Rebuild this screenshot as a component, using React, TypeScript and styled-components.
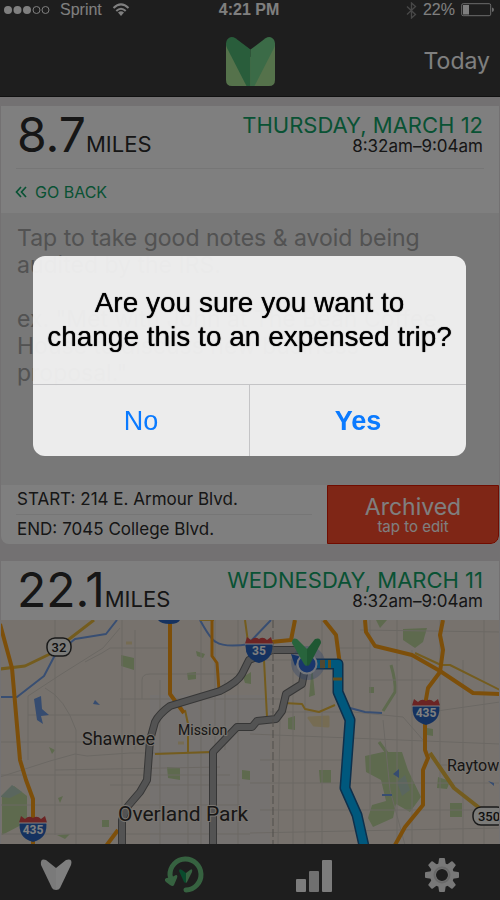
import React from "react";
import styled, { createGlobalStyle, css } from "styled-components";

const GlobalStyle = createGlobalStyle`
  * { box-sizing: border-box; }
  body { margin: 0; background: #e7e3e4; }
  button, textarea { font: inherit; color: inherit; border: 0; margin: 0; padding: 0; background: none; }
`;

const rounded = `Inter, "Noto Sans", sans-serif`;
const system = `"Liberation Sans", Arial, sans-serif`;

const Screen = styled.div`
  min-height: 100vh;
  display: flex;
  flex-direction: column;
  font-family: ${rounded};
  color: #2c2c2c;
  background: #e7e3e4;
`;

const TopBar = styled.header`
  background: #3c3c3c;
  color: #fff;
  border-bottom: 1px solid #222;
`;

const StatusBar = styled.div`
  display: grid;
  grid-template-columns: 1fr auto 1fr;
  align-items: center;
  height: 20px;
  padding: 0 6px 0 4px;
  font: 16px/20px ${system};
`;

const StatusGroup = styled.div<{ $end?: boolean }>`
  display: flex;
  align-items: center;
  gap: ${(p) => (p.$end ? 6 : 10)}px;
  justify-content: ${(p) => (p.$end ? "flex-end" : "flex-start")};
`;

const Clock = styled.time`
  font-weight: 700;
`;

const TitleBar = styled.div`
  display: grid;
  grid-template-columns: 1fr auto 1fr;
  align-items: center;
  height: 76px;
  padding: 6px 10px 0 10px;
`;

const TodayButton = styled.button`
  justify-self: end;
  grid-column: 3;
  font-size: 23px;
  line-height: 28px;
  cursor: pointer;
`;

const LogoSlot = styled.div`
  grid-column: 2;
  line-height: 0;
`;

const Trips = styled.main`
  flex: 1;
  display: flex;
  flex-direction: column;
  gap: 17px;
  padding: 9px 1px 0;
`;

const Card = styled.article<{ $open?: boolean }>`
  background: #fff;
  overflow: hidden;
  border-radius: ${(p) => (p.$open ? "0" : "0 0 8px 8px")};
`;

const CardHead = styled.div`
  display: flex;
  justify-content: space-between;
  align-items: flex-start;
  height: 59px;
  padding: 0 16px;
`;

const Miles = styled.div`
  display: flex;
  align-items: baseline;
`;

const MilesValue = styled.span`
  font-size: 48px;
  line-height: 58px;
`;

const MilesUnit = styled.span`
  font-size: 22px;
  line-height: 24px;
`;

const When = styled.div`
  padding-top: 7px;
  text-align: right;
`;

const DateLine = styled.h2`
  margin: 0;
  font-size: 22px;
  font-weight: 400;
  line-height: 24px;
  color: #12a468;
`;

const TimeLine = styled.div`
  font-size: 17px;
  line-height: 19px;
`;

const Rule = styled.hr`
  margin: 3px 15px 0;
  border: 0;
  border-top: 1px solid #ececec;
`;

const BackRow = styled.div`
  padding: 12px 14px 10px;
`;

const BackButton = styled.button`
  display: flex;
  align-items: center;
  gap: 8px;
  font-size: 16px;
  line-height: 22px;
  color: #12a468;
  cursor: pointer;
`;

const Notes = styled.textarea`
  display: block;
  width: 100%;
  height: 272px;
  padding: 12px 16px;
  resize: none;
  background: #f0f0f0;
  font-size: 23px;
  line-height: 27px;
  &::placeholder { color: #a4a4a4; opacity: 1; }
`;

const CardFoot = styled.div`
  display: flex;
  align-items: stretch;
`;

const Stops = styled.dl`
  flex: 1;
  margin: 0;
  padding: 0 15px;
`;

const Stop = styled.div`
  display: flex;
  gap: 5px;
  font-size: 17px;
  line-height: 29px;
  padding-left: 1px;
  & + & { border-top: 1px solid #ececec; }
  dt, dd { margin: 0; }
`;

const ArchivedButton = styled.button`
  width: 172px;
  background: #fe4c2c;
  border: 1px solid #e01800;
  border-bottom-right-radius: 8px;
  color: #fff;
  font-size: 23px;
  line-height: 24px;
  cursor: pointer;
  small {
    display: block;
    font-size: 15px;
    line-height: 15px;
  }
`;

const MapView = styled.svg`
  display: block;
  width: 100%;
  height: auto;
  background: #eee5db;
`;

const TabBar = styled.nav`
  display: flex;
  justify-content: space-between;
  align-items: center;
  height: 56px;
  padding: 5px 38px 0 36px;
  background: #3c3c3c;
`;

const Tab = styled.button`
  width: 40px;
  height: 40px;
  line-height: 0;
  cursor: pointer;
`;

const Backdrop = styled.div`
  position: fixed;
  inset: 0;
  display: flex;
  align-items: flex-start;
  justify-content: center;
  padding: 256px 34px 0 33px;
  background: rgba(0, 0, 0, 0.5);
`;

const Dialog = styled.div`
  width: 100%;
  max-width: 480px;
  border-radius: 12px;
  overflow: hidden;
  background: rgba(242, 242, 242, 0.95);
  font-family: ${system};
`;

const Question = styled.p`
  margin: 0;
  padding: 30px 12px 30px;
  font-size: 28px;
  line-height: 34px;
  text-align: center;
  color: #000;
  text-shadow: 0 0 1px #000;
`;

const Choices = styled.div`
  display: flex;
  border-top: 1px solid #c4c4c6;
`;

const Choice = styled.button<{ $primary?: boolean }>`
  flex: 1;
  height: 71px;
  padding-top: 2px;
  font-size: 27px;
  color: #0a7aff;
  cursor: pointer;
  ${(p) => p.$primary && css`font-weight: 700; border-left: 1px solid #c4c4c6;`}
`;

const Signal = () => (
  <svg width="46" height="10" viewBox="0 0 46 10" role="img" aria-label="Signal">
    {[4, 13.5, 23].map((x) => <circle key={x} cx={x} cy="5" r="4" fill="#fff" />)}
    {[32.5, 41.5].map((x) => <circle key={x} cx={x} cy="5" r="3.5" fill="none" stroke="#fff" />)}
  </svg>
);

const Wifi = () => (
  <svg width="18" height="14" viewBox="0 0 18 14" role="img" aria-label="Wi-Fi">
    <g fill="none" stroke="#fff" strokeWidth="2">
      <path d="M1.5 5Q9-2.2 16.5 5" />
      <path d="M4.3 8Q9 3.4 13.7 8" />
    </g>
    <path d="M6 9.6Q9 7 12 9.6L9 13Z" fill="#fff" />
  </svg>
);

const Bluetooth = () => (
  <svg width="11" height="17" viewBox="0 0 11 17" role="img" aria-label="Bluetooth">
    <path d="M1 4.5L9.5 12.5L5.5 16V1L9.5 4.5L1 12.5" fill="none" stroke="#909090" strokeWidth="1.3" />
  </svg>
);

const Battery = () => (
  <svg width="33" height="14" viewBox="0 0 33 14" role="img" aria-label="Battery">
    <rect x=".7" y=".7" width="29" height="12" rx="1.5" fill="none" stroke="#d8d8d8" />
    <rect x="2" y="2" width="6" height="9.5" fill="#fff" />
    <path d="M31 4.5Q33 5 33 6.8Q33 8.500 31 9Z" fill="#d8d8d8" />
  </svg>
);

const Logo = () => (
  <svg width="49" height="49" viewBox="0 0 49 49" role="img" aria-label="Logo">
    <path d="M0 6V43Q0 49 6 49H43Q49 49 49 43V6L24.500 20Z" fill="#aae496" />
    <path d="M24.500 12.500L9.500 1.300Q6 -1 2.800 1Q0 3 0 7Q0 9 1 11L20.500 49H24.500Z" fill="#52ba76" />
    <path d="M24.500 12.500L39.500 1.300Q43 -1 46.200 1Q49 3 49 7Q49 9 48 11L28.500 49H24.500Z" fill="#76d68e" />
  </svg>
);

const Chevrons = () => (
  <svg width="12" height="12" viewBox="0 0 12 12" aria-hidden="true">
    <path d="M6 1L1.500 6L6 11M11 1L6.500 6L11 11" fill="none" stroke="#12a468" strokeWidth="1.700" />
  </svg>
);

const minor = [
  "M85 42L102 33L110 28H170", "M0 157L50 141L75 134L87 136L130 133H210",
  "M55 0V215", "M122 0V225", "M135 10V130", "M160 60V225", "M188 110V225", "M201 0V225", "M215 0V225",
  "M28 140V76L60 55L103 28L120 8", "M45 68Q65 78 76 110V225", "M0 122H150", "M120 79H280",
  "M0 155H230", "M0 185H240", "M55 150L220 147", "M110 165H240", "M0 214H250",
  "M142 79V60Q142 54 150 54H240", "M28 95H130", "M225 60V130", "M238 0V225",
  "M293 0V225", "M305 50V225", "M322 0V225", "M353 0V90", "M370 0V190", "M397 0V225",
  "M412 30V225", "M440 0V225", "M463 40V225", "M484 0V225",
  "M250 40H400", "M270 92H350", "M250 114L500 124", "M260 140H350", "M250 163H500",
  "M260 190H500", "M250 213L500 208", "M335 66L353 92L403 97L423 120", "M360 10L500 12",
  "M340 28H370", "M370 60H430", "M430 92L500 82", "M280 100L278 225", "M440 145H500", "M383 100L390 170L405 225",
];

const parks = [
  "M121 35L134 38V50L121 46Z", "M196 31L205 34L203 38L197 36Z", "M187 53L196 52V59L188 60Z",
  "M49 127L55 130L52 134Z", "M2 177L14 166L27 176V202L2 215Z", "M102 200H109V207H102Z",
  "M58 178L63 176L60 183Z", "M57 215L70 214L65 219Z", "M167 147L180 148V160L168 158Z",
  "M403 9L427 8L423 22L415 28L403 20Z", "M376 0H387L380 8Z", "M319 150H331V163H320Z",
  "M365 136L383 132L402 132L408 150L421 177L410 192L396 184L393 198L373 207L368 198L372 185L386 181L381 160L366 152Z",
  "M438 157L450 161L447 169L437 168Z", "M450 183H462V197H450Z", "M288 98L295 96V110L288 109Z",
  "M427 108L433 109V116L427 115Z", "M243 57L251 52V64L245 63Z", "M369 67H374V73H369Z",
  "M242 150L250 151V160L242 159Z", "M312 45L315 75L309 77Z",
];

const Shield = ({ x, y, label }: { x: number; y: number; label: string }) => (
  <g transform={`translate(${x} ${y})`}>
    <path d="M-13-7Q-16 11 0 15Q16 11 13-7Z" fill="#2a65c0" />
    <path d="M-14-4Q-13-8-12-11L-8-8Q-4-12 0-9Q4-12 8-8L12-11Q13-8 14-4Z" fill="#d84848" />
    <path d="M-14-4H14" stroke="#fff" />
    <text y="7" textAnchor="middle" fontSize="12" fontWeight="700" fill="#fff">{label}</text>
  </g>
);

const Plate = ({ x, y, label }: { x: number; y: number; label: string }) => (
  <g transform={`translate(${x} ${y})`}>
    <rect x={-label.length * 4 - 4} y="-9" width={label.length * 8 + 8} height="18" rx="8" fill="#f6f6f2" stroke="#333" strokeWidth="1.500" />
    <text y="5" textAnchor="middle" fontSize="13" fontWeight="500" fill="#222">{label}</text>
  </g>
);

const TripMap = () => (
  <MapView viewBox="0 0 498 224" role="img" aria-label="Trip route map" fontFamily="Roboto, sans-serif">
    <g transform="translate(-1 0)" fill="none" strokeLinejoin="round">
      <rect x="150" y="75" width="120" height="150" fill="#e9e2e2" opacity=".6" />
      {parks.map((d) => <path key={d} d={d} fill="#bcd49c" />)}
      <path d="M397 162L405 155L410 170L402 176ZM0 177L12 165L22 172L10 178Z" fill="#b5cdbd" />
      <path d="M391 45Q396 62 395 72L383 91M379 122L387 133" stroke="#bcd49c" strokeWidth="3" />
      <path d="M126 23H132M178 123H184M309 98L328 97V106L314 105Z" fill="#ecd9a6" stroke="#ecd9a6" strokeWidth="3" />
      <g stroke="#d7d0c7" strokeWidth="1">{minor.map((d) => <path key={d} d={d} />)}</g>
      <path d="M34 79L41 76L42 89L49 95L41 96L43 104L37 100ZM93 84L95 80L100 85ZM393 154L399 149V158ZM488 161L494 163V166Z" fill="#6c98e0" />
      <g stroke="#719ce4" strokeWidth="3">
        <path d="M0 77H17L44 56L55 35L75 19L106 14L117 0" strokeWidth="2" />
        <path d="M200 0Q211 20 216 22Q225 28 250 24" strokeWidth="2" />
        <path d="M271 0L250 22M350 88L365 92L382 93M382 175H392" strokeWidth="2" />
      </g>
      <g stroke="#e8b83c" strokeWidth="2">
        <path d="M0 49L25 46L52 33L68 20L94 0" strokeWidth="3" />
        <path d="M155 134L211 132M185 90L188 104V133" />
        <path d="M200 0H214M245 0L248 22M264 40L267 97M284 83L302 84L305 89L319 92L335 85" />
        <path d="M415 33L441 45L450 45L500 70" />
        <path d="M430 133L443 152L454 168L482 190" strokeWidth="4" />
      </g>
      <g stroke="#fa9f14" strokeWidth="4">
        <path d="M0 4L12 48L20 140L26 160L33 179V225" />
        <path d="M170 0V74L184 93" />
        <path d="M212 0V36L217 43L219 70" strokeWidth="3" />
        <path d="M295 0L291 20L271 22" />
        <path d="M324 0L336 15L340 45" />
        <path d="M365 0L366 12L375 26L412 35L440 51L473 73L500 74" />
        <path d="M443 0L440 15L443 30L440 52L428 68L425 85V130L428 138L423 150V185L405 207L395 225" />
        <path d="M118 210L106 226" />
      </g>
      {[["#6d6d6d", 8], ["#a6a6a6", 6]].map(([color, width]) => (
        <g key={color} stroke={color as string} strokeWidth={width as number}>
          <path d="M122 226V200L128 186L140 172L147 160L150 120L155 102Q159 94 170 86L220 71Q238 62 242 54L249 40L262 35L272 30H300" />
          <path d="M213 226V132L237 107H252L257 101L276 99L282 91L286 74L302 64L305 48" />
        </g>
      ))}
      <path d="M273 0V225" stroke="#a19b94" strokeDasharray="8 3" />
      <path d="M315 44H338V72L350 100L345 168L357 195L364 226" stroke="#1c6098" strokeWidth="11" />
      <path d="M315 44H338V72L350 100L345 168L357 195L364 226" stroke="#00b0fa" strokeWidth="8" />
      <path d="M320 44H325M328 44H331" stroke="#c99c38" strokeWidth="8" />
      <path d="M333 59H342" stroke="#c99c38" strokeWidth="3" />
      <circle cx="308" cy="43" r="17" fill="#4878cc" opacity=".3" />
      <path d="M291 34L301 37L295 46Z" fill="#2866cc" />
      <circle cx="307" cy="44" r="9.500" fill="#326cd8" stroke="#e8ecf4" strokeWidth="2" />
      <path d="M307 29L297 19Q292 17 292 23L304 44Q307 48 307 44Z" fill="#50c878" />
      <path d="M307 29L315 19Q321 17 321 23L310 44Q307 48 307 44Z" fill="#3faf64" />
      <Shield x={33} y={207} label="435" />
      <Shield x={259} y={28} label="35" />
      <Shield x={426} y={90} label="435" />
      <path d="M158 0Q161 4 170 4Q178 4 180 0Z" fill="#2a65c0" />
      <Plate x={59} y={27} label="32" />
      <Plate x={489} y={196} label="350" />
      <g fill="#302e2c" stroke="#f3ece3" strokeWidth="2" paintOrder="stroke">
        <text x="82" y="125" fontSize="18">Shawnee</text>
        <text x="178" y="115" fontSize="14">Mission</text>
        <text x="118" y="201" fontSize="21">Overland Park</text>
        <text x="447" y="151" fontSize="16">Raytow</text>
      </g>
    </g>
  </MapView>
);

const PinIcon = () => (
  <svg width="40" height="40" viewBox="0 0 40 40">
    <path d="M20 13L10 5Q4 3 5 10L16 33Q17 35 20 35Z" fill="#f4f4f4" />
    <path d="M20 13L30 5Q37 3 35 10L24 33Q23 35 20 35Z" fill="#fff" />
  </svg>
);

const HistoryIcon = () => (
  <svg width="40" height="40" viewBox="0 0 40 40">
    <path d="M21 35A15.500 15.500 0 1 0 5 20L6 24" fill="none" stroke="#6cc480" strokeWidth="5" strokeLinecap="round" />
    <path d="M0 24Q2 22 5 23L11 20Q13 20 12 23L9 30Q8 32 5 30L1 27Q-1 25 0 24Z" fill="#6cc480" />
    <path d="M21 18L17 15Q14 13 14 16L19 27Q20 28 21 28Z" fill="#14965a" />
    <path d="M21 18L25 15Q28 13 27 17L22 27Q21 28 21 28Z" fill="#6cc480" />
  </svg>
);

const StatsIcon = () => (
  <svg width="40" height="40" viewBox="0 0 40 40" fill="#f8f8f8">
    <rect x="3" y="24" width="10" height="13" rx="1" />
    <rect x="16" y="16" width="10" height="21" rx="1" fill="#e0e0e0" />
    <rect x="29" y="5" width="10" height="32" rx="1" />
  </svg>
);

const GearIcon = () => (
  <svg width="40" height="40" viewBox="-20 -20 40 40">
    {[0, 45, 90, 135, 180, 225, 270, 315].map((a) => (
      <path key={a} transform={`rotate(${a})`} d="M-4-9L-3-16Q-3-17-2-17H2Q3-17 3-16L4-9Z" fill="#f0f0f0" />
    ))}
    <circle r="9" fill="none" stroke="#f0f0f0" strokeWidth="6" />
    <circle r="7.500" fill="none" stroke="#d2d2d2" strokeWidth="2" />
  </svg>
);

const TripHead = ({ miles, date }: { miles: string; date: string }) => (
  <CardHead>
    <Miles><MilesValue>{miles}</MilesValue><MilesUnit>MILES</MilesUnit></Miles>
    <When>
      <DateLine>{date}</DateLine>
      <TimeLine>8:32am–9:04am</TimeLine>
    </When>
  </CardHead>
);

const notesHint = `Tap to take good notes & avoid being
audited by the IRS.

ex. "Met with John at The Bean Coffee
House to discuss new business
proposal."`;

export default function App() {
  return (
    <>
      <GlobalStyle />
      <Screen>
        <TopBar>
          <StatusBar>
            <StatusGroup><Signal />Sprint<Wifi /></StatusGroup>
            <Clock>4:21 PM</Clock>
            <StatusGroup $end><Bluetooth />22%<Battery /></StatusGroup>
          </StatusBar>
          <TitleBar>
            <LogoSlot><Logo /></LogoSlot>
            <TodayButton type="button">Today</TodayButton>
          </TitleBar>
        </TopBar>
        <Trips>
          <Card>
            <TripHead miles="8.7" date="THURSDAY, MARCH 12" />
            <Rule />
            <BackRow><BackButton type="button"><Chevrons />GO BACK</BackButton></BackRow>
            <Notes aria-label="Trip notes" placeholder={notesHint} />
            <CardFoot>
              <Stops>
                <Stop><dt>START:</dt><dd>214 E. Armour Blvd.</dd></Stop>
                <Stop><dt>END:</dt><dd>7045 College Blvd.</dd></Stop>
              </Stops>
              <ArchivedButton type="button">Archived<small>tap to edit</small></ArchivedButton>
            </CardFoot>
          </Card>
          <Card $open>
            <TripHead miles="22.1" date="WEDNESDAY, MARCH 11" />
            <TripMap />
          </Card>
        </Trips>
        <TabBar aria-label="Main">
          <Tab type="button" aria-label="Trips"><PinIcon /></Tab>
          <Tab type="button" aria-label="History"><HistoryIcon /></Tab>
          <Tab type="button" aria-label="Stats"><StatsIcon /></Tab>
          <Tab type="button" aria-label="Settings"><GearIcon /></Tab>
        </TabBar>
      </Screen>
      <Backdrop>
        <Dialog role="alertdialog" aria-modal="true" aria-labelledby="question">
          <Question id="question">Are you sure you want to<br />change this to an expensed trip?</Question>
          <Choices>
            <Choice type="button">No</Choice>
            <Choice type="button" $primary>Yes</Choice>
          </Choices>
        </Dialog>
      </Backdrop>
    </>
  );
}
